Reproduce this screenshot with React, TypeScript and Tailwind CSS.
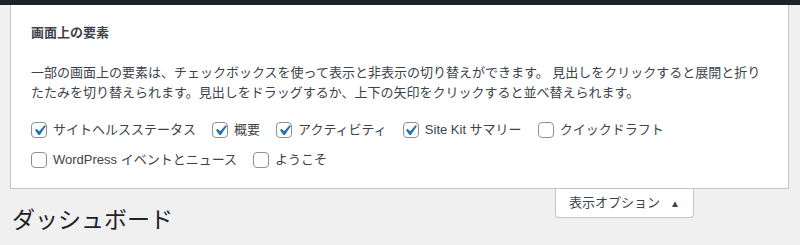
import React from "react";

const items1 = [
  { label: "サイトヘルスステータス", checked: true },
  { label: "概要", checked: true },
  { label: "アクティビティ", checked: true },
  { label: "Site Kit サマリー", checked: true },
  { label: "クイックドラフト", checked: false },
];
const items2 = [
  { label: "WordPress イベントとニュース", checked: false },
  { label: "ようこそ", checked: false },
];

function Box({ checked }: { checked: boolean }) {
  return (
    <span className="flex h-[16px] w-[16px] shrink-0 items-center justify-center rounded-[4px] border border-[#8c8f94] bg-white">
      {checked && (
        <svg width="21" height="21" viewBox="0 0 20 20" className="shrink-0">
          <path d="M14.83 4.89l1.34.94-5.81 8.38H9.02L5.78 9.67l1.34-1.25 2.57 2.4z" fill="#2271b1" />
        </svg>
      )}
    </span>
  );
}

function Row({ items }: { items: { label: string; checked: boolean }[] }) {
  return (
    <div className="flex h-[30px] items-center gap-x-[16px]">
      {items.map((it) => (
        <label key={it.label} className="flex items-center gap-[6px] text-[13px] text-[#3c434a]">
          <Box checked={it.checked} />
          <span>{it.label}</span>
        </label>
      ))}
    </div>
  );
}

export default function App() {
  return (
    <div
      className="h-[245px] w-[800px] overflow-hidden bg-[#f0f0f1]"
      style={{ fontFamily: '"Liberation Sans", "Noto Sans CJK JP", sans-serif' }}
    >
      <div className="h-[5px] bg-[#1d2327]" />
      <div className="ml-[10px] w-[779px] border-x border-b border-[#c3c4c7] bg-white pl-[20px] pt-[18px] pb-[13px]">
        <div className="text-[13px] font-bold leading-[20px] text-[#3c434a]">画面上の要素</div>
        <p className="mt-[20px] w-[740px] text-[13px] leading-[19.5px] text-[#3c434a]">
          一部の画面上の要素は、チェックボックスを使って表示と非表示の切り替えができます。 見出しをクリックすると展開と折りたたみを切り替えられます。見出しをドラッグするか、上下の矢印をクリックすると並べ替えられます。
        </p>
        <div className="mt-[13px]">
          <Row items={items1} />
          <Row items={items2} />
        </div>
      </div>
      <div className="flex items-start">
        <h1 className="flex-1 pl-[12px] pt-[17px] text-[23px] font-normal leading-[29px] text-[#1d2327]">
          ダッシュボード
        </h1>
        <div className="mr-[106px] flex h-[29px] w-[139px] items-center justify-center gap-[10px] rounded-b-[4px] border-x border-b border-[#c3c4c7] bg-white text-[13px] text-[#3c434a]">
          <span>表示オプション</span>
          <span className="text-[10px]">▲</span>
        </div>
      </div>
    </div>
  );
}
